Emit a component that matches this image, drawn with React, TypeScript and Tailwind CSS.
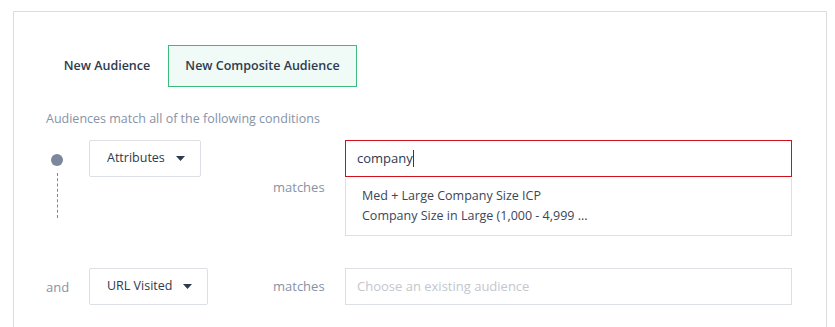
import React from 'react';

function Caret() {
  return (
    <svg width="9" height="5" viewBox="0 0 9 5" className="ml-[11px] text-[#2e3a4d]">
      <path d="M0 0h9L4.5 5z" fill="currentColor" />
    </svg>
  );
}

function SelectButton({ label }: { label: string }) {
  return (
    <button className="h-[37px] pl-[17px] pr-[15px] flex items-center border border-[#dcdfe4] rounded-[2px] bg-white text-[12.5px] text-[#2e3a4d]">
      {label}
      <Caret />
    </button>
  );
}

export default function App() {
  return (
    <div className="w-[835px] h-[327px] overflow-hidden bg-white pl-[13px] pt-[11px] font-['Open_Sans',sans-serif]">
      <div className="w-[814px] h-[330px] border border-[#dcdcdc] border-b-0 pl-[32px] pt-[33px]">
        {/* Tabs */}
        <div className="flex items-center">
          <div className="h-[42px] w-[122px] flex items-center justify-center text-[12.5px] font-semibold text-[#2e3a4d]">
            New Audience
          </div>
          <div className="h-[42px] w-[189px] flex items-center justify-center border border-[#3dba7e] bg-[#f0faf6] text-[12.5px] font-semibold text-[#2e3a4d]">
            New Composite Audience
          </div>
        </div>

        <p className="mt-[24px] text-[12.5px] text-[#8792a6] leading-[16px]">
          Audiences match all of the following conditions
        </p>

        {/* Condition rows */}
        <div className="mt-[13px] grid grid-cols-[43px_184px_72px_447px] gap-y-[32px]">
          <div className="flex flex-col items-center w-[22px] pt-[14px]">
            <div className="w-[12px] h-[12px] rounded-full bg-[#7b879b]" />
            <div className="mt-[7px] h-[45px] border-l border-dashed border-[#7b879b]" />
          </div>
          <div>
            <SelectButton label="Attributes" />
          </div>
          <div className="flex items-center text-[13px] text-[#8792a6]">matches</div>
          <div>
            <div className="h-[37px] flex items-center px-[11px] border border-[#d0111b] text-[13px] text-[#2e3a4d]">
              company
              <span className="w-px h-[17px] bg-[#2e3a4d]" />
            </div>
            <div className="mt-px border border-[#dcdfe4] border-t-0 px-[16px] pt-[8px] pb-[9px] text-[12.5px] leading-[20px] text-[#3b4659]">
              <div>Med + Large Company Size ICP</div>
              <div>Company Size in Large (1,000 - 4,999 ...</div>
            </div>
          </div>

          <div className="flex items-center text-[13px] text-[#8792a6] pt-[3px]">and</div>
          <div>
            <SelectButton label="URL Visited" />
          </div>
          <div className="flex items-center text-[13px] text-[#8792a6]">matches</div>
          <div className="h-[37px] flex items-center px-[11px] border border-[#dcdfe4] text-[13px] text-[#c3c7ce]">
            Choose an existing audience
          </div>
        </div>
      </div>
    </div>
  );
}
